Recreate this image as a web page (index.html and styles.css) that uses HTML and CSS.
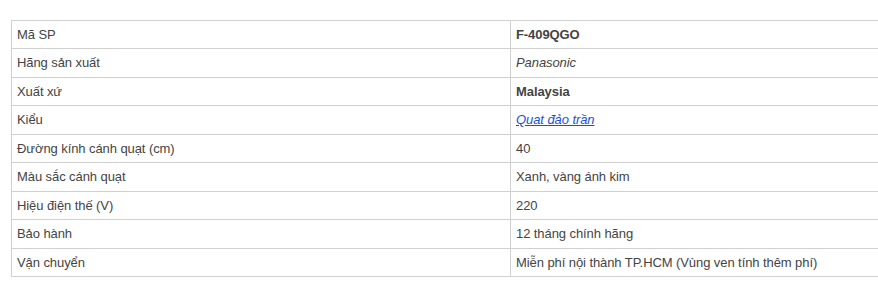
FILE: index.html
```html
<!DOCTYPE html>
<html lang="vi">
<head>
<meta charset="utf-8">
<link rel="stylesheet" href="styles.css">
</head>
<body>
<div class="wrap">
<table class="specs">
  <tbody>
    <tr><td class="k">Mã SP</td><td class="v"><strong>F-409QGO</strong></td></tr>
    <tr><td class="k">Hãng sản xuất</td><td class="v"><em>Panasonic</em></td></tr>
    <tr><td class="k">Xuất xứ</td><td class="v"><strong>Malaysia</strong></td></tr>
    <tr><td class="k">Kiểu</td><td class="v"><a href="#" class="lnk">Quat đảo trần</a></td></tr>
    <tr><td class="k">Đường kính cánh quạt (cm)</td><td class="v">40</td></tr>
    <tr><td class="k">Màu sắc cánh quạt</td><td class="v">Xanh, vàng ánh kim</td></tr>
    <tr><td class="k">Hiệu điện thế (V)</td><td class="v">220</td></tr>
    <tr><td class="k">Bảo hành</td><td class="v">12 tháng chính hãng</td></tr>
    <tr><td class="k">Vận chuyển</td><td class="v">Miễn phí nội thành TP.HCM (Vùng ven tính thêm phí)</td></tr>
  </tbody>
</table>
</div>
</body>
</html>
```

FILE: styles.css
```css
html, body {
  margin: 0;
  padding: 0;
  background: #fff;
  overflow: hidden;
}
.wrap {
  padding: 20px 0 0 11px;
  width: 878px;
  overflow: hidden;
}
.specs {
  border-collapse: collapse;
  width: 900px;
  table-layout: fixed;
  font-family: "Liberation Sans", Arial, sans-serif;
  font-size: 13px;
  letter-spacing: -0.08px;
  color: #444;
}
.specs td {
  border: 1px solid #d0d0d0;
  padding: 5px 5px;
  line-height: 17.45px;
  vertical-align: middle;
  text-align: left;
}
.specs td.k {
  width: 488px;
}
.specs strong {
  font-weight: bold;
}
.lnk {
  color: #1a4fd6;
  font-style: italic;
  text-decoration: underline;
}
```
